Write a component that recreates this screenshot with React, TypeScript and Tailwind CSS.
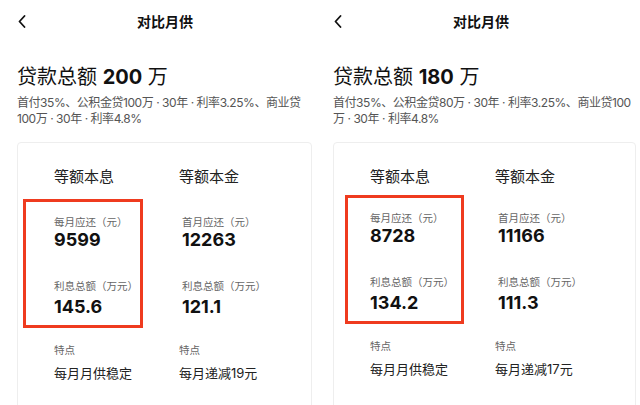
import React from 'react';

type Plan = {
  amount: string;
  line1: string;
  line2: string;
  monthly: string;
  interest: string;
  firstMonth: string;
  interest2: string;
  decrease: string;
  boxLeft: string;
  boxTop: string;
};

const plans: Plan[] = [
  {
    amount: '200',
    line1: '首付35%、公积金贷100万 · 30年 · 利率3.25%、商业贷',
    line2: '100万 · 30年 · 利率4.8%',
    monthly: '9599',
    interest: '145.6',
    firstMonth: '12263',
    interest2: '121.1',
    decrease: '每月递减19元',
    boxLeft: '-ml-[31px] pl-[28px] w-[120px]',
    boxTop: 'mt-[12px]',
  },
  {
    amount: '180',
    line1: '首付35%、公积金贷80万 · 30年 · 利率3.25%、商业贷100',
    line2: '万 · 30年 · 利率4.8%',
    monthly: '8728',
    interest: '134.2',
    firstMonth: '11166',
    interest2: '111.3',
    decrease: '每月递减17元',
    boxLeft: '-ml-[25px] pl-[22px] w-[119px]',
    boxTop: 'mt-[8px] pt-[4px]',
  },
];

function BackIcon() {
  return (
    <svg width="8" height="13" viewBox="0 0 8 13" fill="none">
      <path d="M6.5 1L1.5 6.5L6.5 12" stroke="#111" strokeWidth="1.8" strokeLinecap="round" strokeLinejoin="round" />
    </svg>
  );
}

// 一列数据（等额本息 / 等额本金）
function Column({ title, label1, value1, label2, value2, feature, box, boxClass }: {
  title: string;
  label1: string;
  value1: string;
  label2: string;
  value2: string;
  feature: string;
  box: boolean;
  boxClass: string;
}) {
  return (
    <div className="w-[125px]">
      <p className="text-[15px] leading-[20px] text-[#222]">{title}</p>
      <div className={`${boxClass} ${box ? 'border-[3px] border-[#ef3b1f]' : 'border-[3px] border-transparent'} pt-[14px] pb-[8px]`}>
        <p className="text-[10.5px] leading-[14px] text-[#666] whitespace-nowrap">{label1}</p>
        <p className="text-[18px] leading-[20px] font-bold text-[#111]">{value1}</p>
        <p className="mt-[30px] text-[10.5px] leading-[14px] text-[#666] whitespace-nowrap">{label2}</p>
        <p className="mt-[3px] text-[18px] leading-[20px] font-bold text-[#111]">{value2}</p>
      </div>
      <p className="mt-[16px] text-[10.5px] leading-[14px] text-[#666]">特点</p>
      <p className="mt-[6px] text-[13px] leading-[18px] text-[#222] whitespace-nowrap">{feature}</p>
    </div>
  );
}

function Panel({ plan, className }: { plan: Plan; className: string }) {
  return (
    <div className={`${className} h-[405px] overflow-hidden bg-white`}>
      {/* 顶部导航 */}
      <div className="flex h-[42px] items-center pl-[18px]">
        <BackIcon />
        <span className="ml-[111px] text-[14px] font-bold text-[#111]">对比月供</span>
      </div>
      <div className="pl-[17px] pr-[4px]">
        <p className="mt-[21px] text-[20px] leading-[28px] text-[#111]">
          贷款总额 <span className="font-bold">{plan.amount}</span> 万
        </p>
        <p className="mt-[4px] text-[12px] leading-[16px] tracking-[-0.45px] text-[#555] whitespace-nowrap">
          {plan.line1}
          <br />
          {plan.line2}
        </p>
        {/* 对比卡片 */}
        <div className="mt-[15px] h-[300px] rounded-[4px] border border-[#eeeeee] pl-[36px] pt-[24px]">
          <div className="flex">
            <Column
              title="等额本息"
              label1="每月应还（元）"
              value1={plan.monthly}
              label2="利息总额（万元）"
              value2={plan.interest}
              feature="每月月供稳定"
              box
              boxClass={`${plan.boxLeft} ${plan.boxTop}`}
            />
            <Column
              title="等额本金"
              label1="首月应还（元）"
              value1={plan.firstMonth}
              label2="利息总额（万元）"
              value2={plan.interest2}
              feature={plan.decrease}
              box={false}
              boxClass={plan.boxTop}
            />
          </div>
        </div>
      </div>
    </div>
  );
}

export default function App() {
  return (
    <div
      className="flex w-[640px] h-[405px] bg-white"
      style={{ fontFamily: 'Inter, "Noto Sans CJK SC", sans-serif' }}
    >
      <Panel plan={plans[0]} className="w-[316px]" />
      <Panel plan={plans[1]} className="flex-1" />
    </div>
  );
}
